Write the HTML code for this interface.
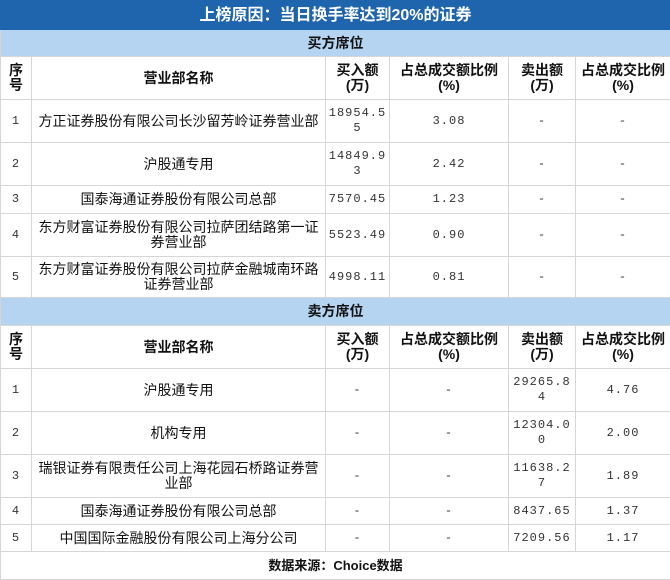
<!DOCTYPE html>
<html><head><meta charset="utf-8"><style>
body{margin:0;background:#fff;width:670px;height:579px;overflow:hidden;font-family:"Liberation Sans","Noto Sans CJK SC",sans-serif;}
table{border-collapse:collapse;table-layout:fixed;width:670px;}
td{border:1px solid #d6d6d6;text-align:center;font-size:14px;color:#111;padding:0 2px;line-height:15px;word-break:break-all;overflow:hidden;}
.t{background:#1f65ae;color:#fff;font-weight:bold;font-size:16px;border-color:#1f65ae;}
.s{background:#b5d4f1;font-weight:bold;font-size:14px;}
.h td{font-weight:bold;font-size:14px;}
.n{font-family:"Liberation Mono","Noto Serif CJK SC",monospace;font-size:12px;letter-spacing:1px;color:#333;}
.f{font-weight:bold;font-size:13px;}
</style></head><body>
<table>
<colgroup><col style="width:31px"><col style="width:294px"><col style="width:64px"><col style="width:119px"><col style="width:67px"><col style="width:95px"></colgroup>
<tr style="height:29px"><td class="t" colspan="6">上榜原因：当日换手率达到20%的证券</td></tr>
<tr style="height:27px"><td class="s" colspan="6">买方席位</td></tr>
<tr class="h" style="height:43px"><td>序号</td><td>营业部名称</td><td>买入额(万)</td><td>占总成交额比例(%)</td><td>卖出额(万)</td><td>占总成交比例(%)</td></tr>
<tr style="height:43px"><td class="n">1</td><td>方正证券股份有限公司长沙留芳岭证券营业部</td><td class="n">18954.55</td><td class="n">3.08</td><td class="n">-</td><td class="n">-</td></tr>
<tr style="height:43px"><td class="n">2</td><td>沪股通专用</td><td class="n">14849.93</td><td class="n">2.42</td><td class="n">-</td><td class="n">-</td></tr>
<tr style="height:28px"><td class="n">3</td><td>国泰海通证券股份有限公司总部</td><td class="n">7570.45</td><td class="n">1.23</td><td class="n">-</td><td class="n">-</td></tr>
<tr style="height:43px"><td class="n">4</td><td>东方财富证券股份有限公司拉萨团结路第一证券营业部</td><td class="n">5523.49</td><td class="n">0.90</td><td class="n">-</td><td class="n">-</td></tr>
<tr style="height:41px"><td class="n">5</td><td>东方财富证券股份有限公司拉萨金融城南环路证券营业部</td><td class="n">4998.11</td><td class="n">0.81</td><td class="n">-</td><td class="n">-</td></tr>
<tr style="height:28px"><td class="s" colspan="6">卖方席位</td></tr>
<tr class="h" style="height:43px"><td>序号</td><td>营业部名称</td><td>买入额(万)</td><td>占总成交额比例(%)</td><td>卖出额(万)</td><td>占总成交比例(%)</td></tr>
<tr style="height:43px"><td class="n">1</td><td>沪股通专用</td><td class="n">-</td><td class="n">-</td><td class="n">29265.84</td><td class="n">4.76</td></tr>
<tr style="height:43px"><td class="n">2</td><td>机构专用</td><td class="n">-</td><td class="n">-</td><td class="n">12304.00</td><td class="n">2.00</td></tr>
<tr style="height:43px"><td class="n">3</td><td>瑞银证券有限责任公司上海花园石桥路证券营业部</td><td class="n">-</td><td class="n">-</td><td class="n">11638.27</td><td class="n">1.89</td></tr>
<tr style="height:27px"><td class="n">4</td><td>国泰海通证券股份有限公司总部</td><td class="n">-</td><td class="n">-</td><td class="n">8437.65</td><td class="n">1.37</td></tr>
<tr style="height:27px"><td class="n">5</td><td>中国国际金融股份有限公司上海分公司</td><td class="n">-</td><td class="n">-</td><td class="n">7209.56</td><td class="n">1.17</td></tr>
<tr style="height:28px"><td class="f" colspan="6">数据来源：Choice数据</td></tr>
</table>
</body></html>
